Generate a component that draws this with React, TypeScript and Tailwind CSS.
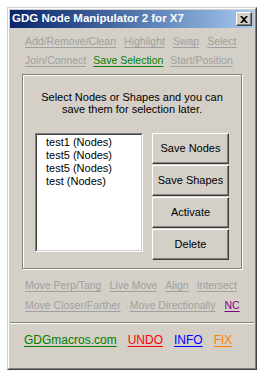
const font = "font-['Liberation_Sans',Arial,sans-serif]";

function Link({ children, color = "text-[#a0a0a0]" }: { children: React.ReactNode; color?: string }) {
  return <span className={`${color} underline underline-offset-[2px] decoration-1 whitespace-nowrap`}>{children}</span>;
}

function Button({ children }: { children: React.ReactNode }) {
  return (
    <div className="h-[31px] flex items-center justify-center bg-[#d4d0c8] border border-t-white border-l-white border-r-[#404040] border-b-[#404040] shadow-[inset_-1px_-1px_#808080]">
      {children}
    </div>
  );
}

export default function App() {
  return (
    <div className={`min-h-[377px] bg-white pt-[7px] pl-[7px] ${font} text-[11px] text-black`}>
      <div className="w-[250px] h-[363px] bg-[#d4d0c8] border border-t-[#d4d0c8] border-l-[#d4d0c8] border-r-[#404040] border-b-[#404040] flex flex-col">
        <div className="flex-1 flex flex-col border border-t-white border-l-white border-r-[#808080] border-b-[#808080] p-[1px]">
          {/* title bar */}
          <div className="h-[18px] flex items-center justify-between pl-[2px] pr-[2px] bg-gradient-to-r from-[#0a246a] to-[#a6caf0]">
            <span className="text-white font-bold text-[11.5px] leading-none whitespace-nowrap">GDG Node Manipulator 2 for X7</span>
            <div className="w-[16px] h-[14px] bg-[#d4d0c8] border border-t-white border-l-white border-r-[#404040] border-b-[#404040] shadow-[inset_-1px_-1px_#808080] flex items-center justify-center">
              <svg width="8" height="7" viewBox="0 0 8 7">
                <path d="M0 0h2l2 2 2-2h2L5 3.5 8 7H6L4 5 2 7H0l3-3.5z" fill="black" />
              </svg>
            </div>
          </div>

          <div className="pl-[15px] pr-[4px] pt-[6px] flex flex-col gap-[5px] leading-[14px] text-[10.5px]">
            <div className="flex gap-[8px]">
              <Link>Add/Remove/Clean</Link>
              <Link>Highlight</Link>
              <Link>Swap</Link>
              <Link>Select</Link>
            </div>
            <div className="flex gap-[7px]">
              <Link>Join/Connect</Link>
              <Link color="text-[#008000]">Save Selection</Link>
              <Link>Start/Position</Link>
            </div>
          </div>

          {/* group box */}
          <div className="mx-[12px] mt-[7px] h-[195px] w-[220px] border border-[#808080] shadow-[inset_1px_1px_white,1px_1px_white] flex flex-col">
            <p className="text-center leading-[12px] pt-[16px]">
              Select Nodes or Shapes and you can
              <br />
              save them for selection later.
            </p>
            <div className="flex pl-[12px] pt-[18px] gap-[9px]">
              <div className="w-[108px] h-[119px] bg-white border border-t-[#808080] border-l-[#808080] border-r-white border-b-white">
                <div className="h-full border border-t-[#404040] border-l-[#404040] border-r-[#d4d0c8] border-b-[#d4d0c8] pl-[9px] pt-[1px] leading-[13px]">
                  <div>test1 (Nodes)</div>
                  <div>test5 (Nodes)</div>
                  <div>test5 (Nodes)</div>
                  <div>test (Nodes)</div>
                </div>
              </div>
              <div className="w-[77px] flex flex-col gap-[1px]">
                <Button>Save Nodes</Button>
                <Button>Save Shapes</Button>
                <Button>Activate</Button>
                <Button>Delete</Button>
              </div>
            </div>
          </div>

          <div className="pl-[15px] pr-[4px] pt-[9px] flex flex-col gap-[6px] leading-[14px] text-[10.5px]">
            <div className="flex gap-[8px]">
              <Link>Move Perp/Tang</Link>
              <Link>Live Move</Link>
              <Link>Align</Link>
              <Link>Intersect</Link>
            </div>
            <div className="flex gap-[9px]">
              <Link>Move Closer/Farther</Link>
              <Link>Move Directionally</Link>
              <Link color="text-[#800080]">NC</Link>
            </div>
          </div>

          <div className="mt-[10px] h-[2px] border-t border-t-[#808080] border-b border-b-white" />

          <div className="flex gap-[11px] pl-[14px] pt-[8px] text-[12px] leading-[16px]">
            <Link color="text-[#008000]">GDGmacros.com</Link>
            <Link color="text-[#ff0000]">UNDO</Link>
            <Link color="text-[#0000ff]">INFO</Link>
            <Link color="text-[#ff8000]">FIX</Link>
          </div>
        </div>
      </div>
    </div>
  );
}
